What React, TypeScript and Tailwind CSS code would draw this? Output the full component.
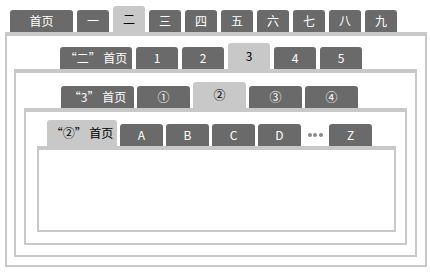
const FONT = { fontFamily: '"Noto Sans CJK SC", "Liberation Sans", sans-serif' };

type TabProps = {
   label: string,
   width: string,
   active?: boolean,
};

// one tab; active sits 4px taller and shares the box border colour
const Tab = ({ label, width, active = false }: TabProps) => (
   <div
      className={`${width} ${active ? 'h-[26px] bg-[#c8c8c8] text-black' : 'h-[22px] bg-[#6a6a6a] text-white'} flex items-center justify-center rounded-t-[3px] text-[12px] leading-none whitespace-nowrap`}
   >
      {label}
   </div>
);

const Dots = () => (
   <div className='flex h-[22px] w-[22px] items-center justify-center gap-[1.5px]'>
      <span className='block h-[4px] w-[4px] rounded-full bg-[#8a8a8a]' />
      <span className='block h-[4px] w-[4px] rounded-full bg-[#8a8a8a]' />
      <span className='block h-[4px] w-[4px] rounded-full bg-[#8a8a8a]' />
   </div>
);

const level1 = ['一', '二', '三', '四', '五', '六', '七', '八', '九'];
const level2 = ['1', '2', '3', '4', '5'];
const level3 = ['①', '②', '③', '④'];

export default function App() {
   return (
      <div className='h-[272px] w-[430px] bg-white' style={FONT}>
         {/* level 1 */}
         <div className='flex items-end gap-[4px] pl-[10px] pt-[6px]'>
            <Tab label='首页' width='w-[63px]' />
            {level1.map((t) => (
               <Tab key={t} label={t} width='w-[32px]' active={t === '二'} />
            ))}
         </div>
         <div className='ml-[5px] h-[235px] w-[422px] border-x-2 border-t-4 border-b-2 border-[#c8c8c8] pt-[7px]'>
            {/* level 2 */}
            <div className='ml-[53px] flex items-end gap-[4px]'>
               <Tab label='“二” 首页' width='w-[72px]' />
               {level2.map((t) => (
                  <Tab key={t} label={t} width='w-[42px]' active={t === '3'} />
               ))}
            </div>
            <div className='ml-[7px] h-[188px] w-[403px] border-x-2 border-t-4 border-b-2 border-[#c8c8c8] pt-[9px]'>
               {/* level 3 */}
               <div className='ml-[45px] flex items-end gap-[3px]'>
                  <Tab label='“3” 首页' width='w-[73px]' />
                  {level3.map((t) => (
                     <Tab key={t} label={t} width='w-[53px]' active={t === '②'} />
                  ))}
               </div>
               <div className='ml-[8px] h-[137px] w-[383px] border-x-2 border-t-4 border-b-2 border-[#c8c8c8] pt-[8px]'>
                  {/* level 4 */}
                  <div className='ml-[21px] flex items-end gap-[3px]'>
                     <Tab label='“②” 首页' width='w-[70px]' active />
                     <Tab label='A' width='w-[43px]' />
                     <Tab label='B' width='w-[43px]' />
                     <Tab label='C' width='w-[43px]' />
                     <Tab label='D' width='w-[43px]' />
                     <Dots />
                     <Tab label='Z' width='w-[43px]' />
                  </div>
                  <div className='ml-[11px] h-[86px] w-[359px] border-x-2 border-t-4 border-b-2 border-[#c8c8c8]' />
               </div>
            </div>
         </div>
      </div>
   );
}
